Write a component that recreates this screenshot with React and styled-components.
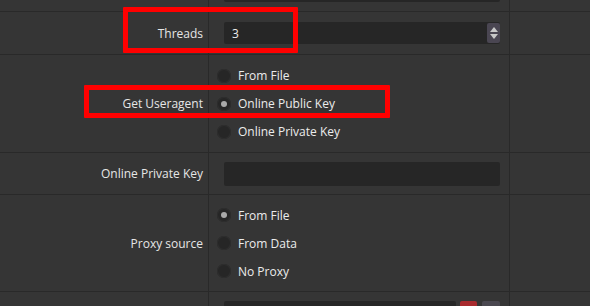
import React from "react";
import styled, { createGlobalStyle } from "styled-components";

const Global = createGlobalStyle`
  html, body { margin: 0; padding: 0; background: #353535; }
  body { font-family: "Open Sans", "Noto Sans", sans-serif; font-size: 12px; color: #e8e8e8; overflow: hidden; }
`;

const Root = styled.div`
  position: relative;
  width: 590px;
  height: 306px;
  overflow: hidden;
  background: #353535;
`;

const Table = styled.div`
  margin-top: -32px;
  display: flex;
  flex-direction: column;
`;

const Row = styled.div`
  display: grid;
  grid-template-columns: 209px 301px 1fr;
  height: ${(p) => p.$h}px;
  flex: none;
  border-bottom: 1px solid #292929;
`;

const Label = styled.div`
  border-right: 1px solid #292929;
  display: flex;
  align-items: center;
  justify-content: flex-end;
  padding-right: 5px;
  white-space: nowrap;
  color: #e6e6e6;
`;

const Value = styled.div`
  border-right: 1px solid #292929;
  display: flex;
  align-items: center;
  padding: 0 9px 0 15px;
`;

const Extra = styled.div``;

const Field = styled.div`
  flex: 1;
  height: ${(p) => p.$h || 22}px;
  background: #262626;
  border-radius: 2px;
  display: flex;
  align-items: center;
  padding-left: 8px;
  color: #ececec;
`;

const FieldText = styled.span`
  flex: 1;
`;

const Spinner = styled.div`
  width: 13px;
  align-self: stretch;
  margin: 1px 0;
  background: #4a4652;
  border-radius: 2px;
  display: flex;
  flex-direction: column;
  align-items: center;
  justify-content: center;
  gap: 2px;
`;

const Arrow = styled.div`
  width: 0;
  height: 0;
  border-left: 4px solid transparent;
  border-right: 4px solid transparent;
  ${(p) =>
    p.$up
      ? "border-bottom: 5px solid #c8c8c8;"
      : "border-top: 5px solid #c8c8c8;"}
`;

const RadioList = styled.div`
  display: flex;
  flex-direction: column;
  margin-left: -7px;
`;

const RadioItem = styled.div`
  height: 28px;
  display: flex;
  align-items: center;
  gap: 7px;
  color: #ececec;
`;

const Circle = styled.div`
  width: 14px;
  height: 14px;
  border-radius: 50%;
  background: #262626;
  box-shadow: inset 0 0 0 1px #2e2e2e;
  display: flex;
  align-items: center;
  justify-content: center;
`;

const Dot = styled.div`
  width: 6px;
  height: 6px;
  border-radius: 50%;
  background: #a9a9a9;
`;

const BottomValue = styled.div`
  border-right: 1px solid #292929;
  display: flex;
  align-items: flex-start;
  padding: 9px 9px 0 15px;
  gap: 4px;
`;

const SmallBtn = styled.div`
  width: ${(p) => p.$w}px;
  height: 22px;
  border-radius: 2px;
  background: ${(p) => p.$bg};
  margin-left: ${(p) => p.$ml || 0}px;
`;

const Highlight = styled.div`
  position: absolute;
  box-sizing: border-box;
  border: 5px solid #ff0000;
  border-radius: 1px;
  pointer-events: none;
`;

function Radio({ label, checked }) {
  return (
    <RadioItem>
      <Circle>{checked && <Dot />}</Circle>
      <span>{label}</span>
    </RadioItem>
  );
}

export default function App() {
  return (
    <Root>
      <Global />
      <Table>
        <Row $h={43}>
          <Label />
          <Value>
            <Field $h={24} />
          </Value>
          <Extra />
        </Row>
        <Row $h={42}>
          <Label>Threads</Label>
          <Value>
            <Field $h={22}>
              <FieldText>3</FieldText>
              <Spinner>
                <Arrow $up />
                <Arrow />
              </Spinner>
            </Field>
          </Value>
          <Extra />
        </Row>
        <Row $h={97}>
          <Label>Get Useragent</Label>
          <Value>
            <RadioList>
              <Radio label="From File" />
              <Radio label="Online Public Key" checked />
              <Radio label="Online Private Key" />
            </RadioList>
          </Value>
          <Extra />
        </Row>
        <Row $h={41}>
          <Label>Online Private Key</Label>
          <Value>
            <Field $h={24} />
          </Value>
          <Extra />
        </Row>
        <Row $h={96}>
          <Label>Proxy source</Label>
          <Value>
            <RadioList>
              <Radio label="From File" checked />
              <Radio label="From Data" />
              <Radio label="No Proxy" />
            </RadioList>
          </Value>
          <Extra />
        </Row>
        <Row $h={44}>
          <Label />
          <BottomValue>
            <Field $h={24} />
            <SmallBtn $w={17} $bg="#a82a2e" />
            <SmallBtn $w={18} $bg="#4a4850" $ml={1} />
          </BottomValue>
          <Extra />
        </Row>
      </Table>
      <Highlight style={{ left: 123, top: 7, width: 175, height: 46 }} />
      <Highlight style={{ left: 84, top: 85, width: 306, height: 33 }} />
    </Root>
  );
}
